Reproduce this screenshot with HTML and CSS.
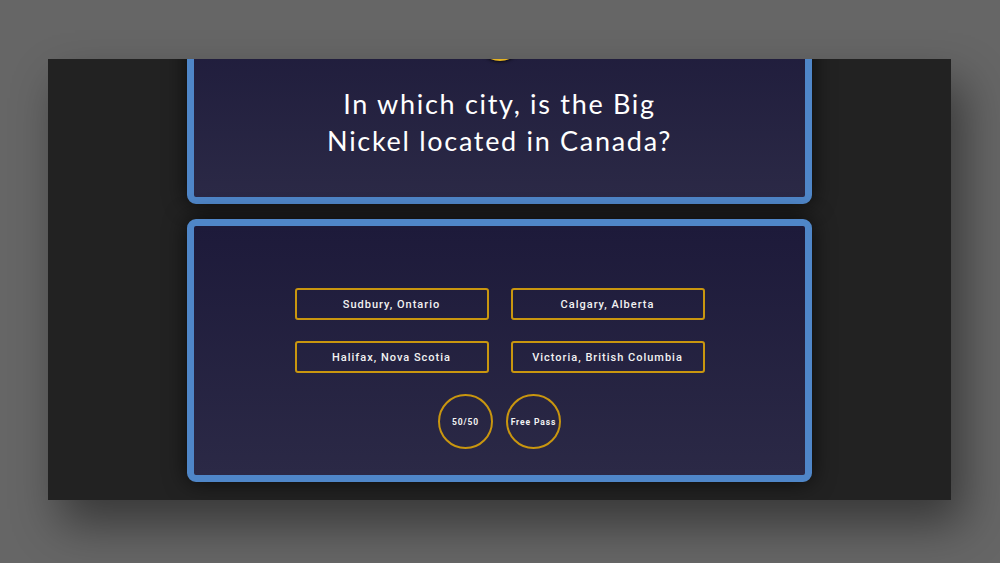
FILE: index.html
```html
<!DOCTYPE html>
<html lang="en">
<head>
    <meta charset="UTF-8">
    <meta name="viewport" content="width=device-width, initial-scale=1.0">
    <title>Trivia</title>
    <link rel="stylesheet" href="styles.css">
</head>
<body>
    <div class="stage">
        <div class="card question-card">
            <div class="timer"></div>
            <h1 class="question">In which city, is the Big<br>Nickel located in Canada?</h1>
        </div>

        <div class="card answer-card">
            <div class="answers">
                <button class="answer">Sudbury, Ontario</button>
                <button class="answer">Calgary, Alberta</button>
                <button class="answer">Halifax, Nova Scotia</button>
                <button class="answer">Victoria, British Columbia</button>
            </div>
            <div class="lifelines">
                <button class="lifeline">50/50</button>
                <button class="lifeline">Free Pass</button>
            </div>
        </div>
    </div>
</body>
</html>
```

FILE: styles.css
```css
html, body {
    margin: 0;
    height: 100%;
}
body {
    background-color: #666666;
    font-family: Roboto, Arial, sans-serif;
    padding: 59px 49px 0 48px;
    box-sizing: border-box;
}
.stage {
    height: 441px;
    background-color: #222222;
    overflow: hidden;
    display: flex;
    flex-direction: column;
    align-items: center;
    gap: 15px;
    box-shadow: 12px 24px 44px rgba(0, 0, 0, 0.45);
}
.card {
    width: 625px;
    box-sizing: border-box;
    border: 7px solid #4f86c8; /* голубая рамка */
    border-radius: 9px;
    background: linear-gradient(to bottom, #1d1a3a, #2b2946);
    box-shadow: 0 0 22px rgba(0, 0, 0, 0.7);
    flex-shrink: 0;
}
.question-card {
    margin-top: -57px;
    padding-bottom: 38px;
    display: flex;
    flex-direction: column;
    align-items: center;
}
.timer {
    width: 50px;
    height: 50px;
    margin-top: 2px;
    border-radius: 50%;
    background-color: #e6b422;
    box-shadow: 0 1px 3px rgba(0, 0, 0, 0.7);
}
.question {
    margin: 24px 0 0;
    font-family: Lato, sans-serif;
    font-weight: 400;
    font-size: 27px;
    line-height: 37px;
    letter-spacing: 1.7px;
    color: #ffffff;
    text-align: center;
}
.answer-card {
    height: 263px;
    padding-top: 62px;
    display: flex;
    flex-direction: column;
    align-items: center;
    gap: 21px;
}
.answers {
    display: grid;
    grid-template-columns: 194px 194px;
    gap: 21px 22px;
}
.answer, .lifeline {
    background: transparent;
    border: 2px solid #c9960f; /* золотая рамка */
    color: #f2f2f2;
    font-family: Roboto, Arial, sans-serif;
    cursor: pointer;
    padding: 0;
}
.answer {
    height: 32px;
    border-radius: 3px;
    font-size: 11px;
    font-weight: 500;
    letter-spacing: 1px;
}
.lifelines {
    display: flex;
    gap: 13px;
}
.lifeline {
    width: 55px;
    height: 55px;
    border-radius: 50%;
    font-size: 8.5px;
    font-weight: 700;
    letter-spacing: 0.9px;
}
```
